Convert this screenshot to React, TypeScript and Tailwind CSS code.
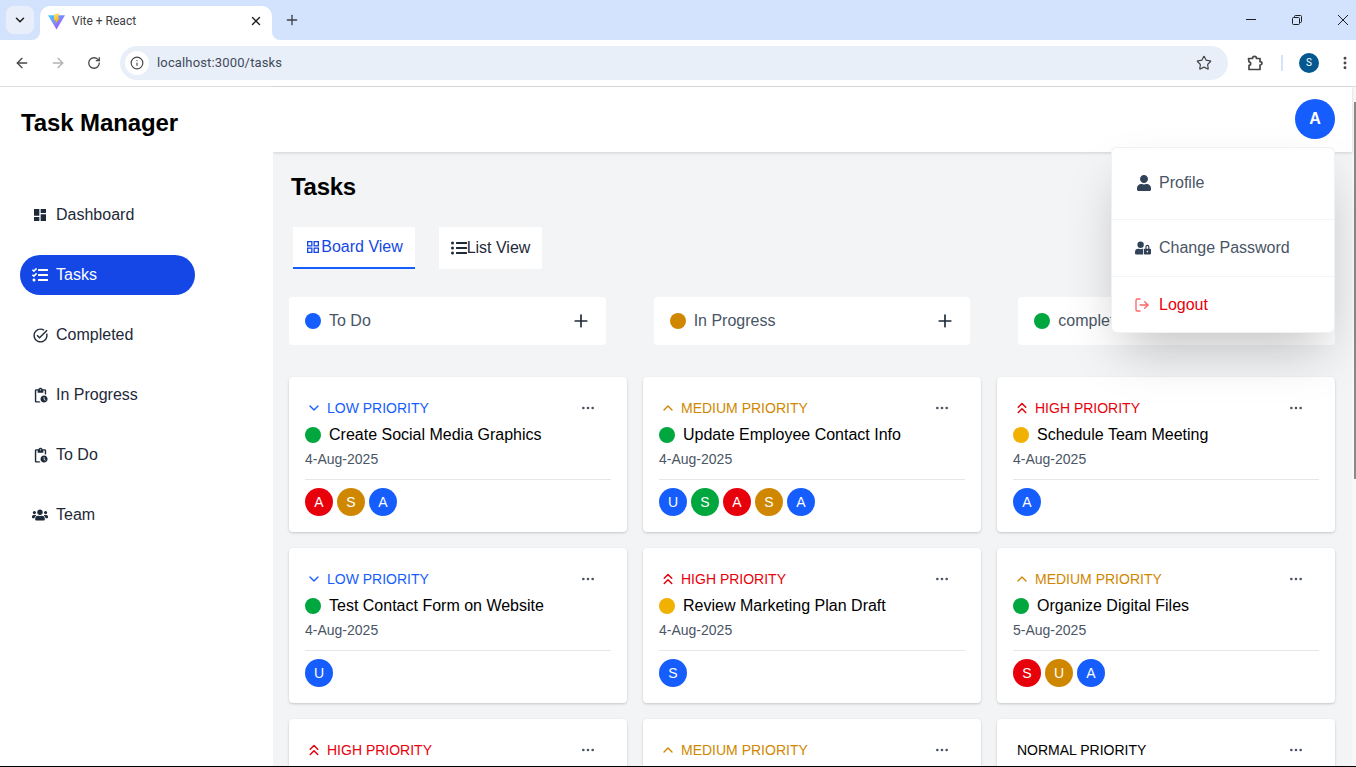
import React from "react";
import { ArrowLeft, ArrowRight, RotateCw, Info, Star, EllipsisVertical, Plus, X, ChevronDown, ChevronUp, ChevronsUp, Ellipsis, LogOut } from "lucide-react";
import { MdDashboard, MdTaskAlt, MdOutlinePendingActions } from "react-icons/md";
import { FaTasks, FaUsers, FaUser, FaUserLock, FaListUl } from "react-icons/fa";

const P = { low: { t: "LOW PRIORITY", c: "text-[#155dfc]", I: ChevronDown, s: 16 }, med: { t: "MEDIUM PRIORITY", c: "text-[#d08700]", I: ChevronUp, s: 16 }, high: { t: "HIGH PRIORITY", c: "text-[#e7000b]", I: ChevronsUp, s: 18 }, norm: { t: "NORMAL PRIORITY", c: "text-black", I: null, s: 0 } } as const;
const BG: Record<string, string> = { r: "bg-[#e7000b]", y: "bg-[#d08700]", b: "bg-[#155dfc]", g: "bg-[#00a63e]", o: "bg-[#f0b100]" };

type C = { p: keyof typeof P; d?: string; title?: string; date?: string; u?: [string, string][] };
const cards: C[] = [
  { p: "low", d: "g", title: "Create Social Media Graphics", date: "4-Aug-2025", u: [["A", "r"], ["S", "y"], ["A", "b"]] },
  { p: "med", d: "g", title: "Update Employee Contact Info", date: "4-Aug-2025", u: [["U", "b"], ["S", "g"], ["A", "r"], ["S", "y"], ["A", "b"]] },
  { p: "high", d: "o", title: "Schedule Team Meeting", date: "4-Aug-2025", u: [["A", "b"]] },
  { p: "low", d: "g", title: "Test Contact Form on Website", date: "4-Aug-2025", u: [["U", "b"]] },
  { p: "high", d: "o", title: "Review Marketing Plan Draft", date: "4-Aug-2025", u: [["S", "b"]] },
  { p: "med", d: "g", title: "Organize Digital Files", date: "5-Aug-2025", u: [["S", "r"], ["U", "y"], ["A", "b"]] },
  { p: "high" }, { p: "med" }, { p: "norm" },
];

function Card({ c }: { c: C }) {
  const pr = P[c.p];
  const I = pr.I;
  return (
    <div className="h-[155px] rounded bg-white px-4 pt-[22px] shadow-[0_1px_3px_rgba(0,0,0,0.12),0_1px_2px_rgba(0,0,0,0.08)]">
      <div className="flex h-[18px] items-center justify-between">
        <div className={`flex items-center gap-1 text-sm ${pr.c} ${I ? "" : "pl-1"}`}>
          {I && (
            <span className="flex w-[18px] justify-center">
              <I size={pr.s} strokeWidth={2} className="shrink-0" />
            </span>
          )}
          <span>{pr.t}</span>
        </div>
        <Ellipsis size={16} strokeWidth={2} className="mr-[15px] text-[#4a5565]" />
      </div>
      {c.title && (
        <>
          <div className="mt-[6px] flex h-[24px] items-center gap-2 text-black">
            <span className={`h-4 w-4 rounded-full ${BG[c.d!]}`} />
            <span className="text-base">{c.title}</span>
          </div>
          <div className="mt-[2px] h-[20px] text-sm leading-5 text-[#4a5565]">{c.date}</div>
          <div className="mt-[10px] flex gap-1 border-t border-[#e5e7eb] pt-2">
            {c.u!.map(([l, k], i) => (
              <span key={i} className={`flex h-7 w-7 items-center justify-center rounded-full text-sm text-white ${BG[k]}`}>{l}</span>
            ))}
          </div>
        </>
      )}
    </div>
  );
}

function Col({ name, dot }: { name: string; dot: string }) {
  return (
    <div className="flex h-12 items-center justify-between rounded bg-white pl-4 pr-[15px]">
      <div className="flex items-center gap-2 text-[#4a5565]">
        <span className={`h-4 w-4 rounded-full ${dot}`} />
        <span className="text-base">{name}</span>
      </div>
      <Plus size={20} strokeWidth={2} className="text-[#1e2939]" />
    </div>
  );
}

const nav = [
  { t: "Dashboard", I: MdDashboard, s: 16 },
  { t: "Tasks", I: FaTasks, s: 16, on: true },
  { t: "Completed", I: MdTaskAlt, s: 17 },
  { t: "In Progress", I: MdOutlinePendingActions, s: 17 },
  { t: "To Do", I: MdOutlinePendingActions, s: 17 },
  { t: "Team", I: FaUsers, s: 16 },
];

function ViteLogo() {
  return (
    <svg width="17" height="17" viewBox="0 0 16 16" className="shrink-0">
      <defs>
        <linearGradient id="v1" x1="0" y1="0" x2="1" y2="1"><stop offset="0" stopColor="#41d1ff" /><stop offset="1" stopColor="#bd34fe" /></linearGradient>
        <linearGradient id="v2" x1="0" y1="0" x2="0.3" y2="1"><stop offset="0" stopColor="#ffea83" /><stop offset="1" stopColor="#ffa800" /></linearGradient>
      </defs>
      <path d="M0 2.2 L16 2.2 L8 15.5 Z" fill="url(#v1)" />
      <path d="M10.8 0.3 L5.8 1.3 L5.5 7 L7.4 6.6 L7 10 L11 4.6 L9.3 4.9 Z" fill="url(#v2)" />
    </svg>
  );
}

function WinMin() {
  return (
    <svg width="10" height="10" viewBox="0 0 10 10" fill="none" stroke="#1f1f1f" strokeWidth="1"><path d="M0 4.5 H10" /></svg>
  );
}
function WinRestore() {
  return (
    <svg width="10" height="10" viewBox="0 0 10 10" fill="none" stroke="#1f1f1f" strokeWidth="1">
      <rect x="0.5" y="2.5" width="7" height="7" rx="1" />
      <path d="M2.5 2.5 V1.5 a1 1 0 0 1 1 -1 H8.5 a1 1 0 0 1 1 1 V6.5 a1 1 0 0 1 -1 1 H7.5" />
    </svg>
  );
}
function WinClose() {
  return (
    <svg width="10" height="10" viewBox="0 0 10 10" fill="none" stroke="#1f1f1f" strokeWidth="1"><path d="M0 0 L10 10 M10 0 L0 10" /></svg>
  );
}
function Ext() {
  return (
    <svg width="18" height="18" viewBox="0 0 18 18" fill="none" stroke="#474747" strokeWidth="1.7" strokeLinejoin="round" className="shrink-0">
      <path d="M2.5 4.5 H6.5 C6.5 1.6 10.5 1.6 10.5 4.5 H14 V7.6 C16.6 7.6 16.6 11 14 11 V15.5 H3 V11.4 C5.2 11.4 5.2 7.8 3 7.8 Z" />
    </svg>
  );
}
function GridSquares() {
  return (
    <svg width="16" height="16" viewBox="0 0 16 16" fill="none" stroke="currentColor" strokeWidth="1.3" className="shrink-0">
      <rect x="2.65" y="2.65" width="4.2" height="4.2" />
      <rect x="9.15" y="2.65" width="4.2" height="4.2" />
      <rect x="2.65" y="9.15" width="4.2" height="4.2" />
      <rect x="9.15" y="9.15" width="4.2" height="4.2" />
    </svg>
  );
}

export default function App() {
  return (
    <div className="flex h-screen w-full flex-col overflow-hidden bg-white font-['Liberation_Sans',Arial,sans-serif]">
      {/* tab strip */}
      <div className="flex h-10 shrink-0 items-end bg-[#d3e3fd] font-['Roboto',sans-serif]">
        <div className="mb-[6px] ml-[6px] flex h-[28px] w-[28px] items-center justify-center rounded-lg bg-[#e8effb]">
          <ChevronDown size={14} strokeWidth={2.6} className="text-[#1f1f1f]" />
        </div>
        <div className="relative ml-[6px] flex h-[34px] w-[232px] items-center rounded-t-[10px] bg-white pb-1 pl-2 pr-[9px]">
          <span className="absolute bottom-0 -left-2 h-2 w-2 bg-white"><span className="block h-2 w-2 rounded-br-lg bg-[#d3e3fd]" /></span>
          <span className="absolute bottom-0 -right-2 h-2 w-2 bg-white"><span className="block h-2 w-2 rounded-bl-lg bg-[#d3e3fd]" /></span>
          <ViteLogo />
          <span className="ml-[7px] flex-1 text-xs text-[#3c4043]">Vite + React</span>
          <X size={14} strokeWidth={2.4} className="text-[#1f1f1f]" />
        </div>
        <Plus size={16} strokeWidth={2} className="mb-[12px] ml-[12px] text-[#3c4043]" />
        <div className="mb-[15px] ml-auto flex items-center">
          <WinMin />
          <span className="ml-[36px]"><WinRestore /></span>
          <span className="ml-[36px] mr-[8px]"><WinClose /></span>
        </div>
      </div>
      {/* toolbar */}
      <div className="flex h-[47px] shrink-0 items-center rounded-tl-lg border-b border-[#dadce0] bg-white pb-[1px] font-['Roboto',sans-serif]">
        <ArrowLeft size={16} strokeWidth={2} className="ml-[14px] text-[#474747]" />
        <ArrowRight size={16} strokeWidth={2} className="ml-[20px] text-[#b0b1b3]" />
        <RotateCw size={14} strokeWidth={2.2} className="ml-[21px] text-[#474747]" />
        <div className="ml-[19px] flex h-[34px] w-[1108px] items-center rounded-full bg-[#e9eff9] pl-[5px] pr-[16px]">
          <span className="flex h-6 w-6 items-center justify-center rounded-full bg-white">
            <Info size={14} strokeWidth={2} className="text-[#474747]" />
          </span>
          <span className="ml-[8px] flex-1 text-[13px] tracking-[0.15px] text-[#3f4a5a]">localhost:3000/tasks</span>
          <Star size={16} strokeWidth={1.8} className="text-[#474747]" />
        </div>
        <span className="ml-[18px]"><Ext /></span>
        <span className="ml-[17px] h-[16px] w-[2px] bg-[#d3e3fd]" />
        <span className="ml-[16px] flex h-5 w-5 items-center justify-center rounded-full bg-[#04588f] text-[10px] text-white">S</span>
        <EllipsisVertical size={16} strokeWidth={2.4} className="ml-[18px] text-[#474747]" />
      </div>
      {/* page */}
      <div className="relative flex min-h-0 flex-1 border-b border-black">
        <aside className="relative z-20 flex w-[273px] shrink-0 flex-col bg-white">
          <h1 className="ml-[21px] mt-[20px] h-8 text-2xl font-bold leading-8 tracking-[-0.1px] text-black">Task Manager</h1>
          <nav className="mt-[56px] flex flex-col gap-5 pl-5">
            {nav.map(({ t, I, s, on }) => (
              <div key={t} className={`flex h-10 w-[175px] items-center gap-2 rounded-full pl-3 text-base ${on ? "bg-[#1447e6] text-white" : "text-[#1e2939]"}`}>
                <span className="flex w-4 justify-center"><I size={s} className="shrink-0" /></span>
                <span>{t}</span>
              </div>
            ))}
          </nav>
        </aside>
        <div className="flex min-w-0 flex-1 flex-col">
          <header className="z-10 flex h-[65px] shrink-0 items-start justify-end bg-white pr-[17px] pt-3 shadow-[0_1px_3px_rgba(0,0,0,0.15)]">
            <span className="flex h-10 w-10 items-center justify-center rounded-full bg-[#155dfc] text-base font-bold text-white">A</span>
          </header>
          <main className="min-h-0 flex-1 overflow-hidden bg-[#f3f4f6] pl-[16px] pr-[15px]">
            <h2 className="ml-[2px] mt-[19px] h-8 text-2xl font-bold leading-8 tracking-[-0.3px] text-black">Tasks</h2>
            <div className="ml-1 mt-[24px] flex gap-6 text-base">
              <div className="flex h-[42px] w-[122px] items-center justify-center border-b-2 border-[#155dfc] bg-white text-[#1447e6]">
                <GridSquares />
                <span>Board View</span>
              </div>
              <div className="flex h-[42px] w-[103px] items-center justify-center bg-white text-[#1e2939]">
                <FaListUl size={16} />
                <span>List View</span>
              </div>
            </div>
            <div className="mt-[28px] grid w-[1046px] grid-cols-3 gap-[48px]">
              <Col name="To Do" dot="bg-[#155dfc]" />
              <Col name="In Progress" dot="bg-[#d08700]" />
              <Col name="completed" dot="bg-[#00a63e]" />
            </div>
            <div className="mt-8 grid w-[1046px] grid-cols-3 gap-4">
              {cards.map((c, i) => <Card key={i} c={c} />)}
            </div>
          </main>
        </div>
        {/* scrollbar */}
        <div className="flex w-[4px] shrink-0 flex-col bg-[#f8f8f8] pl-[2px] pt-[15px]">
          <div className="h-[377px] bg-[#8a8a8a]" />
        </div>
        {/* dropdown */}
        <div className="absolute right-[21px] top-[60px] z-20 w-[224px] rounded-md border border-[#e5e7eb]/60 bg-white text-base shadow-2xl">
          <div className="flex h-[71px] items-center gap-[7px] pb-[2px] pl-[24px] text-[#4a5565]">
            <FaUser size={16} className="text-[#314158]" /><span>Profile</span>
          </div>
          <div className="flex h-[57px] items-center gap-[8px] border-t border-[#f3f4f6] pl-[23px] text-[#4a5565]">
            <FaUserLock size={16} className="text-[#314158]" /><span>Change Password</span>
          </div>
          <div className="flex h-[56px] items-center gap-[9px] border-t border-[#f3f4f6] pl-[22px] text-[#e7000b]">
            <LogOut size={16} strokeWidth={2} className="text-[#ff6467]" /><span>Logout</span>
          </div>
        </div>
      </div>
    </div>
  );
}
